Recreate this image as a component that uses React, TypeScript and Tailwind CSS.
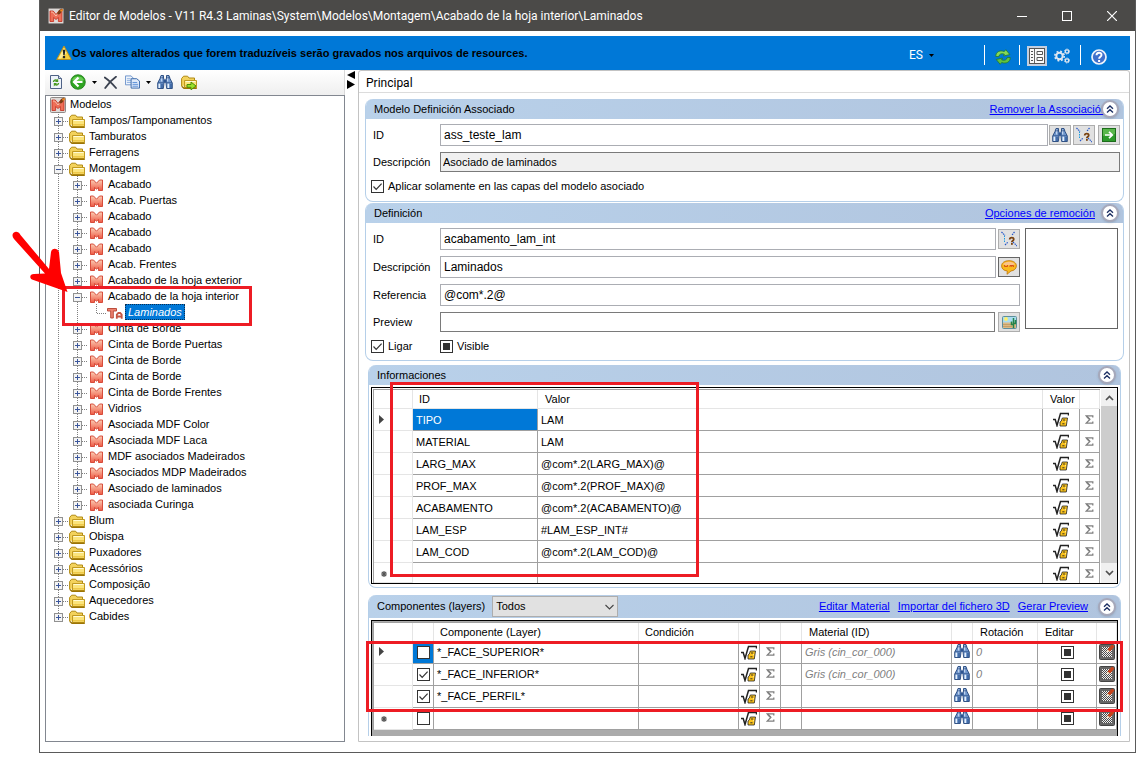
import React from "react";

const inputBase =
  "min-w-0 flex-1 border bg-white px-[3px] text-[12px] leading-4 text-black outline-none";

/* ---------- icons ---------- */

function AppIcon({ className = "size-4" }: { className?: string }) {
  return (
    <svg viewBox="0 0 16 16" className={className} aria-hidden="true">
      <rect x="0.5" y="0.5" width="15" height="15" rx="1" fill="#dedad8" stroke="#8f8a88" />
      <path d="M2 3h3.200l2.800 3.500L10.800 3H14v10.500h-3.600V9.500L8 11.500l-2.400-2v4H2z" fill="#ee6f58" stroke="#c22c1c" strokeWidth=".8" />
      <path d="M3 4h1.700l3.300 4 3-4" fill="none" stroke="#fbc9b4" strokeWidth=".9" />
      <path d="M9 6l2-4 3-1.500 1 1.500-3 4-2 .5z" fill="#7a3d16" />
      <path d="M12 2l2.500-1 .8 1.200L13 4z" fill="#f08a24" />
    </svg>
  );
}

function WarningIcon() {
  return (
    <svg viewBox="0 0 16 16" className="size-4" aria-hidden="true">
      <path d="M8 1L15.300 14.500H.7z" fill="#f5cf3e" stroke="#b99020" strokeLinejoin="round" />
      <path d="M8 3l2.500 5L5 13.500H2.300z" fill="#fff3b0" opacity=".8" />
      <path d="M6.700 4.800h2.600l-.6 5.400H7.300z" fill="#222" />
      <rect x="6.900" y="11" width="2.200" height="2.200" fill="#222" />
    </svg>
  );
}

function Caret({ className = "text-black" }: { className?: string }) {
  return (
    <svg viewBox="0 0 5 3" className={`h-[3px] w-[5px] ${className}`} aria-hidden="true">
      <path d="M0 0h5L2.500 3z" fill="currentColor" />
    </svg>
  );
}

function PageRefreshIcon() {
  return (
    <svg viewBox="0 0 12 14" className="h-[14px] w-3" aria-hidden="true">
      <path d="M.5.5h8l3 3v10H.5z" fill="#eef3fa" stroke="#4f6286" />
      <path d="M8.500.5v3h3" fill="#cfd8e6" stroke="#4f6286" />
      <path d="M2.800 7c.4-2.400 2.600-3.300 4.200-2.300L8.200 3.500v3.600H4.800l1.100-1.200c-.8-.4-1.500 0-1.700 1.100z" fill="#4b9a22" />
      <path d="M9.200 8c-.4 2.400-2.600 3.300-4.200 2.300l-1.200 1.200V7.900h3.400L6.100 9.100c.8.400 1.500 0 1.700-1.100z" fill="#4b9a22" />
    </svg>
  );
}

function BackIcon() {
  return (
    <svg viewBox="0 0 16 16" className="size-4" aria-hidden="true">
      <circle cx="8" cy="8" r="7.300" fill="#2fa522" stroke="#1b7a14" strokeWidth=".8" />
      <path d="M2 6a6.500 5.500 0 0112 0c-3 2-8 2-12 0z" fill="#8fe676" opacity=".6" />
      <path d="M8.500 3.500L4 8l4.500 4.500M4.500 8h8" fill="none" stroke="#fff" strokeWidth="2.200" />
    </svg>
  );
}

function DeleteIcon() {
  return (
    <svg viewBox="0 0 13 13" className="size-[13px]" aria-hidden="true">
      <path d="M.8 1.500Q6 5 12 12M12 .8Q6 5 1.200 12" fill="none" stroke="#3b4250" strokeWidth="1.800" strokeLinecap="round" />
    </svg>
  );
}

function CopyIcon() {
  return (
    <svg viewBox="0 0 16 14" className="h-[14px] w-[15px]" aria-hidden="true">
      <path d="M.5.500h6l2.500 2.500v7H.5z" fill="#eef4fc" stroke="#6d93cb" />
      <path d="M2 3.500h4M2 5.500h5M2 7.500h5" stroke="#8fb0de" />
      <path d="M6.500 3.500h6L15.500 6v7.500h-9z" fill="#dfeafa" stroke="#3565a8" />
      <path d="M8 7.500h5M8 9.500h6M8 11.500h6" stroke="#5b8fd6" />
    </svg>
  );
}

function BinocularsIcon() {
  return (
    <svg viewBox="0 0 16 14" className="h-[14px] w-4 shrink-0" aria-hidden="true">
      <path d="M4 .5h2.500v2.500L7 4.500V8l-.7 5.500H.7V8L3 3.500zM9.500.5H12l1 3L15.300 8v5.500H9.700L9 8V4.500l.5-1.500z" fill="#6f96cc" stroke="#24467c" strokeWidth=".9" />
      <path d="M6.800 4.500h2.400v3.300H6.800z" fill="#2f5590" />
      <path d="M2.300 8.500v4.500M11.300 8.500v4.500" stroke="#e6f0fb" strokeWidth="1.500" />
      <path d="M4.700 1.500v5M10.700 1.500v5" stroke="#d3e2f5" />
      <path d="M1 7.800h5.300M9.700 7.800H15M3.500 2.800h3M9.500 2.800h3" stroke="#24467c" strokeWidth=".7" />
      <path d="M5 9v4M14 9v4" stroke="#2d5796" strokeWidth="1.300" />
    </svg>
  );
}

function FolderShape() {
  return (
    <>
      <path d="M.6 11.500V3.500l2-2.300h4l1.400 1.800h5.500v3" fill="#f3d25c" stroke="#b18a13" />
      <path d="M3.500 5.500H15.500V12.500H3.500z" fill="#fbe47c" stroke="#c19a22" />
      <path d="M4.500 6.500h10" stroke="#fffbd6" />
      <path d="M4 10.800h11" stroke="#efc94a" strokeWidth="1.600" />
      <path d="M1 11.500l2 1.700h12.800" fill="none" stroke="#9b7405" strokeWidth="1.500" />
    </>
  );
}

function FolderIcon() {
  return (
    <svg viewBox="0 0 16 14" className="mt-[2px] h-[14px] w-4 shrink-0" aria-hidden="true">
      <FolderShape />
    </svg>
  );
}

function FolderArrowIcon() {
  return (
    <svg viewBox="0 0 16 15" className="h-[15px] w-4" aria-hidden="true">
      <FolderShape />
      <path d="M6 9.500h4V7l5 4-5 3.800v-2.500H6z" fill="#9be02a" stroke="#4a8f0a" />
    </svg>
  );
}

function ModelIcon() {
  return (
    <svg viewBox="0 0 18 14" className="mt-[2px] h-[14px] w-[18px] shrink-0" aria-hidden="true">
      <defs>
        <linearGradient id="model-fill" x1="0" y1="0" x2="0" y2="1">
          <stop offset="0" stopColor="#fbcdb4" />
          <stop offset="1" stopColor="#ee5a45" />
        </linearGradient>
      </defs>
      <path
        d="M2.500 2h3l3 3.200 3-3.200h3v10.500h-4V9.500l-2 1.700-2-1.700v3h-4z"
        fill="url(#model-fill)"
        stroke="#d2402e"
        strokeWidth=".9"
      />
    </svg>
  );
}

function DefinitionIcon() {
  return (
    <svg viewBox="0 0 16 13" className="mt-[3px] h-[13px] w-4 shrink-0" aria-hidden="true">
      <path d="M.5 1.500h9v2.500H6.300V11H3.700V4H.5z" fill="#ec8270" stroke="#b5412f" strokeWidth=".9" />
      <path d="M9.800 11.800V7.500l1.500-1.500h1.900l1.500 1.500v4.300M9.800 9.500h5" fill="none" stroke="#c65542" strokeWidth="1.800" />
    </svg>
  );
}

function SyncIcon() {
  return (
    <svg viewBox="0 0 16 16" className="size-4" aria-hidden="true">
      <path d="M.8 7.500C.5 3 5 .8 9.300 2.500L10.800.7 14.800 5.500 8.500 7l.9-1.800C6.500 4 4.300 5 3.800 7.500z" fill="#86d957" stroke="#1f7a2e" strokeWidth=".8" />
      <path d="M15.200 8.500c.3 4.500-4.200 6.700-8.500 5L5.200 15.300 1.200 10.500 7.500 9l-.9 1.800c2.900 1.200 5.100.2 5.600-2.300z" fill="#62c240" stroke="#1f7a2e" strokeWidth=".8" />
    </svg>
  );
}

function FormIcon() {
  return (
    <svg viewBox="0 0 16 16" className="size-4" aria-hidden="true">
      <rect x=".5" y=".5" width="15" height="15" fill="#fafafa" stroke="#555" />
      <path d="M5.500 1v14" stroke="#666" />
      <path d="M2 3.500h2M2 6.500h2M2 9.500h2M2 12.500h2" stroke="#555" />
      <path d="M8 3.500h5.500v3H8zM8 9.500h5.500v3H8z" fill="#fff" stroke="#555" />
    </svg>
  );
}

function GearsIcon() {
  return (
    <svg viewBox="0 0 16 16" className="size-4" aria-hidden="true">
      <circle cx="5.500" cy="8" r="3.200" fill="none" stroke="#dfe7f1" strokeWidth="2" />
      <circle cx="5.500" cy="8" r="4.700" fill="none" stroke="#dfe7f1" strokeWidth="1.600" strokeDasharray="1.900 1.800" />
      <circle cx="13" cy="3.500" r="1.700" fill="none" stroke="#dfe7f1" strokeWidth="1.300" />
      <circle cx="13" cy="3.500" r="2.500" fill="none" stroke="#dfe7f1" strokeWidth="1" strokeDasharray="1 1" />
      <circle cx="13" cy="12.500" r="1.700" fill="none" stroke="#dfe7f1" strokeWidth="1.300" />
      <circle cx="13" cy="12.500" r="2.500" fill="none" stroke="#dfe7f1" strokeWidth="1" strokeDasharray="1 1" />
    </svg>
  );
}

function HelpIcon() {
  return (
    <svg viewBox="0 0 16 16" className="size-4" aria-hidden="true">
      <circle cx="8" cy="8" r="7" fill="#3f70cc" stroke="#eef3fb" strokeWidth="1.700" />
      <path d="M5.500 6.200C5.500 3 10.700 3 10.500 6c0 1.700-2.400 1.700-2.400 3.800" fill="none" stroke="#fff" strokeWidth="1.900" />
      <rect x="7.100" y="11" width="2" height="2" fill="#fff" />
    </svg>
  );
}

function PathIcon() {
  return (
    <svg viewBox="0 0 16 16" className="size-4" aria-hidden="true">
      <path d="M3.500 4.500v7.500" fill="none" stroke="#1c9be0" strokeDasharray="1.500 1" />
      <path d="M.5 1L4 4.500M13.500 1L11 4M4 14l3-3M12 11l4 4" fill="none" stroke="#2455c8" strokeWidth="1.200" strokeDasharray="1.500 .8" />
      <path d="M8.700 8.500C8.700 5.800 13 6 12.700 8.400c0 1.300-1.900 1.400-1.900 2.800" fill="none" stroke="#7a4312" strokeWidth="1.800" />
      <rect x="10" y="12" width="1.800" height="1.800" fill="#7a4312" />
    </svg>
  );
}

function GoIcon() {
  return (
    <svg viewBox="0 0 14 14" className="size-[14px]" aria-hidden="true">
      <rect x=".5" y=".5" width="13" height="13" fill="#2d9a2b" stroke="#1d6d1c" />
      <path d="M1 1h12v5L1 8z" fill="#6cc35a" opacity=".7" />
      <path d="M3 7h7M7 3.800L10.300 7 7 10.200" fill="none" stroke="#fff" strokeWidth="1.700" />
    </svg>
  );
}

function SpeechIcon() {
  return (
    <svg viewBox="0 0 16 15" className="h-[15px] w-4" aria-hidden="true">
      <path d="M8 .7c4.300 0 7.400 2 7.400 5.200 0 3-2.600 4.800-5.400 5.100L6 14.300 6.300 11C3 10.700.6 8.900.6 5.900.6 2.700 3.700.7 8 .7z" fill="#f9b91e" stroke="#c07408" strokeWidth=".8" />
      <path d="M2 4.500c2-3.800 10-3.800 12 0-3 1-9 1-12 0z" fill="#fbc48c" />
      <path d="M3.500 5v1.500h3V5M9 7V5.500h3.500V7M10.800 5.500V7" fill="none" stroke="#d8501c" />
    </svg>
  );
}

function PictureIcon() {
  return (
    <svg viewBox="0 0 15 13" className="h-[13px] w-[15px]" aria-hidden="true">
      <rect x=".5" y=".5" width="14" height="12" rx="1" fill="#a9dcf0" stroke="#5d8f9c" />
      <path d="M1 6.500h13V12H1z" fill="#dcb984" />
      <path d="M1 8.500h9M1 10.500h9" stroke="#b9935a" strokeWidth=".7" />
      <circle cx="4" cy="3" r="1.900" fill="#fff06a" />
      <path d="M11.500 2v10M9.500 5.500v3h2M13.500 4v3.500h-2" fill="none" stroke="#23844a" strokeWidth="1.500" />
    </svg>
  );
}

function FormulaIcon() {
  return (
    <svg viewBox="0 0 16 15" className="h-[15px] w-4 shrink-0" aria-hidden="true">
      <path d="M0 7.500h2.200l1.800 6L7.500 1.500H15.500v2" fill="none" stroke="#222" strokeWidth="1.500" />
      <path d="M9.300 6h5.200l-1.200 8H7V10l1.300-1z" fill="#fbc31c" stroke="#222" strokeWidth=".8" />
      <path d="M10 8h2.200M9.300 11.800h2.200" stroke="#222" strokeWidth=".9" />
      <path d="M13 9.500l-1 .5" stroke="#fff2b0" />
    </svg>
  );
}

function SigmaIcon() {
  return (
    <svg viewBox="0 0 9 9" className="size-[9px] shrink-0" aria-hidden="true">
      <path d="M7.800 2.600V.9H1.200L4.800 4.500 1.200 8.100h6.600V6.400" fill="none" stroke="#808080" strokeWidth="1.300" />
      <path d="M1.500 1l3.300 3.500" stroke="#808080" strokeWidth="1.800" />
    </svg>
  );
}

function TextureIcon() {
  return (
    <svg viewBox="0 0 16 16" className="size-4 shrink-0" aria-hidden="true">
      <defs>
        <pattern id="weave" width="2" height="2" patternUnits="userSpaceOnUse">
          <rect width="2" height="2" fill="#4a4a4a" />
          <rect width="1" height="1" fill="#f0f0f0" />
          <rect x="1" y="1" width="1" height="1" fill="#f0f0f0" />
        </pattern>
      </defs>
      <rect x=".5" y=".5" width="15" height="15" rx="1" fill="#666" stroke="#444" />
      <rect x="3" y="3" width="10" height="10" fill="url(#weave)" />
      <path d="M8.500 5.500L13 .5l2.500 2L11 7.500z" fill="#c8431a" />
      <path d="M7.500 8.200l1-2.700 2.500 2z" fill="#f8e3c4" />
    </svg>
  );
}

function RowArrow() {
  return (
    <svg viewBox="0 0 5 9" className="ml-[5px] h-[9px] w-[5px]" aria-hidden="true">
      <path d="M0 0l5 4.500L0 9z" fill="#444" />
    </svg>
  );
}

function NewRowMark() {
  return (
    <svg viewBox="0 0 6 6" className="mt-[3px] ml-[7px] size-[6px]" aria-hidden="true">
      <path d="M3 0v6M0 3h6M.8.8l4.400 4.400M5.200.8L.8 5.200" stroke="#555" strokeWidth="1.200" />
    </svg>
  );
}

/* ---------- shared controls ---------- */

type CheckState = "on" | "off" | "mixed";

function Check({ id, label, state }: { id?: string; label?: string; state: CheckState }) {
  return (
    <span className="inline-grid size-[13px] shrink-0">
      <input
        type="checkbox"
        id={id}
        aria-label={label}
        defaultChecked={state === "on"}
        ref={(el) => {
          if (el) el.indeterminate = state === "mixed";
        }}
        className="peer size-[13px] appearance-none border border-[#333] bg-white [grid-area:1/1]"
      />
      <svg
        viewBox="0 0 13 13"
        className="pointer-events-none invisible size-[13px] [grid-area:1/1] peer-checked:visible"
        aria-hidden="true"
      >
        <path d="M2.500 6.500l2.700 2.800L10.600 3.700" fill="none" stroke="#333" strokeWidth="1.200" />
      </svg>
      <span className="pointer-events-none invisible m-[3px] bg-[#333] [grid-area:1/1] peer-indeterminate:visible" />
    </span>
  );
}

function CollapseButton() {
  return (
    <button
      type="button"
      aria-label="Recolher"
      className="flex size-[18px] shrink-0 items-center justify-center rounded-full border-2 border-[#a6a8ba] bg-white shadow"
    >
      <svg viewBox="0 0 8 8" className="size-2" aria-hidden="true">
        <path d="M1 3.800L4 1l3 2.800M1 7.500l3-2.800 3 2.800" fill="none" stroke="#1c2f63" strokeWidth="1.300" />
      </svg>
    </button>
  );
}

function TextLink({ children }: { children: React.ReactNode }) {
  return (
    <a href="#" className="text-[11px] whitespace-nowrap text-[#0000ff] underline">
      {children}
    </a>
  );
}

function IconButton({
  label,
  active = false,
  children,
}: {
  label: string;
  active?: boolean;
  children: React.ReactNode;
}) {
  return (
    <button
      type="button"
      aria-label={label}
      className={`flex h-5 w-[22px] shrink-0 items-center justify-center border bg-[#e1e1e1] ${
        active ? "border-[#666]" : "border-[#adadad]"
      }`}
    >
      {children}
    </button>
  );
}

function ToolButton({ label, children }: { label: string; children: React.ReactNode }) {
  return (
    <button type="button" aria-label={label} className="flex items-center gap-[6px]">
      {children}
    </button>
  );
}

/* ---------- tree ---------- */

type TreeItem = {
  label: string;
  level: 1 | 2 | 3;
  open?: boolean;
  last?: boolean;
};

const models = (labels: string[]): TreeItem[] =>
  labels.map((label) => ({ label, level: 2 as const }));

const tree: TreeItem[] = [
  { label: "Tampos/Tamponamentos", level: 1 },
  { label: "Tamburatos", level: 1 },
  { label: "Ferragens", level: 1 },
  { label: "Montagem", level: 1, open: true },
  ...models([
    "Acabado",
    "Acab. Puertas",
    "Acabado",
    "Acabado",
    "Acabado",
    "Acab. Frentes",
    "Acabado de la hoja exterior",
  ]),
  { label: "Acabado de la hoja interior", level: 2, open: true },
  { label: "Laminados", level: 3, last: true },
  ...models([
    "Cinta de Borde",
    "Cinta de Borde Puertas",
    "Cinta de Borde",
    "Cinta de Borde",
    "Cinta de Borde Frentes",
    "Vidrios",
    "Asociada MDF Color",
    "Asociada MDF Laca",
    "MDF asociados Madeirados",
    "Asociados MDP Madeirados",
    "Asociado de laminados",
  ]),
  { label: "asociada Curinga", level: 2, last: true },
  { label: "Blum", level: 1 },
  { label: "Obispa", level: 1 },
  { label: "Puxadores", level: 1 },
  { label: "Acessórios", level: 1 },
  { label: "Composição", level: 1 },
  { label: "Aquecedores", level: 1 },
  { label: "Cabides", level: 1, last: true },
];

function Guide() {
  return (
    <svg viewBox="0 0 19 16" className="h-4 w-[19px] shrink-0" aria-hidden="true">
      <path d="M12.500 0v16" stroke="#808080" strokeDasharray="1 1" />
    </svg>
  );
}

function Branch({ item }: { item: TreeItem }) {
  return (
    <svg viewBox="0 0 23 16" className="h-4 w-[23px] shrink-0" aria-hidden="true">
      <path d={item.last ? "M12.500 0v10" : "M12.500 0v16"} stroke="#808080" strokeDasharray="1 1" />
      <path d="M13 9.500h10" stroke="#808080" strokeDasharray="1 1" />
      {item.level < 3 && (
        <>
          <rect x="8.500" y="5.500" width="8" height="8" fill="#f4f4f4" stroke="#919191" />
          <path d={item.open ? "M10 9.500h5" : "M10 9.500h5M12.500 7v5"} stroke="#3b569c" />
        </>
      )}
    </svg>
  );
}

function TreeRow({ item }: { item: TreeItem }) {
  return (
    <li className="flex h-4">
      {item.level > 1 && <Guide />}
      {item.level > 2 && <Guide />}
      <Branch item={item} />
      {item.level === 1 && <FolderIcon />}
      {item.level === 2 && <ModelIcon />}
      {item.level === 3 && <DefinitionIcon />}
      {item.level === 3 ? (
        <button
          type="button"
          className="ml-[2px] h-4 border border-dotted border-[#0b2f52] bg-[#0078d7] px-[2px] text-[11px] leading-[13px] whitespace-nowrap text-white italic"
        >
          {item.label}
        </button>
      ) : (
        <button
          type="button"
          className={`text-[11px] leading-4 whitespace-nowrap ${item.level === 1 ? "ml-1" : "ml-[2px]"}`}
        >
          {item.label}
        </button>
      )}
    </li>
  );
}

function Sidebar() {
  return (
    <aside className="flex w-[300px] shrink-0 flex-col">
      <div className="flex h-[25px] items-center border-r border-[#d8d8d8] bg-linear-to-b from-white to-[#efefef] pb-px pl-[5px]">
        <ToolButton label="Atualizar">
          <PageRefreshIcon />
        </ToolButton>
        <div className="ml-2">
          <ToolButton label="Voltar">
            <BackIcon />
            <Caret />
          </ToolButton>
        </div>
        <div className="ml-[7px]">
          <ToolButton label="Excluir">
            <DeleteIcon />
          </ToolButton>
        </div>
        <div className="ml-2">
          <ToolButton label="Copiar">
            <CopyIcon />
            <Caret />
          </ToolButton>
        </div>
        <div className="ml-[6px]">
          <ToolButton label="Localizar">
            <BinocularsIcon />
          </ToolButton>
        </div>
        <div className="ml-2">
          <ToolButton label="Exportar">
            <FolderArrowIcon />
          </ToolButton>
        </div>
      </div>
      <div className="relative flex-1 border border-[#828790] bg-white">
        <div className="flex h-4 items-center gap-[4px] pl-1">
          <AppIcon className="mt-[2px] size-4 shrink-0" />
          <button type="button" className="text-[11px] leading-4">
            Modelos
          </button>
        </div>
        <ul>
          {tree.map((item, i) => (
            <TreeRow key={i} item={item} />
          ))}
        </ul>
        <div className="pointer-events-none absolute top-[190px] left-[16px] h-10 w-[190px] border-3 border-[#ed1c24]" />
        <svg
          viewBox="0 0 60 66"
          className="pointer-events-none absolute top-[134px] left-[-36px] h-[66px] w-[60px]"
          aria-hidden="true"
        >
          <path
            d="M4 2.500C6 1 9 2 10.500 5L39 39 41 22c1-4 6-4.500 8 0L51 43l6.500 19L22 49.500c-3-2-2-5.500 2-5.500l11-.5L4 9C2 6.500 2 4 4 2.500z"
            fill="#ff0000"
          />
        </svg>
      </div>
    </aside>
  );
}

/* ---------- groups ---------- */

function GroupHeader({
  title,
  actions,
  tall = false,
}: {
  title: React.ReactNode;
  actions?: React.ReactNode;
  tall?: boolean;
}) {
  return (
    <header
      className={`flex items-center justify-between rounded-t-[7px] bg-linear-to-r from-[#b9d1ea] to-[#b0c4de] pr-1 pl-2 text-[11px] ${
        tall ? "h-[23px]" : "h-5"
      }`}
    >
      {title}
      <div className="flex items-center">
        {actions}
        <CollapseButton />
      </div>
    </header>
  );
}

function FieldRow({
  id,
  label,
  children,
}: {
  id: string;
  label: string;
  children: React.ReactNode;
}) {
  return (
    <div className="flex items-center">
      <label htmlFor={id} className="w-[67px] shrink-0 text-[11px] leading-4">
        {label}
      </label>
      {children}
    </div>
  );
}

function AssociatedGroup() {
  return (
    <section className="rounded-[8px] border border-t-0 border-[#b5cfe9] pb-2">
      <GroupHeader
        title={<h2>Modelo Definición Associado</h2>}
        actions={
          <span className="-mr-[6px]">
            <TextLink>Remover la Associación</TextLink>
          </span>
        }
      />
      <div className="mt-[5px] flex flex-col gap-[6px] pr-[3px] pl-[7px]">
        <FieldRow id="assoc-id" label="ID">
          <input id="assoc-id" defaultValue="ass_teste_lam" className={`${inputBase} h-[22px] border-[#abadb3]`} />
          <div className="ml-[1px] flex gap-[2px]">
            <IconButton label="Localizar modelo">
              <BinocularsIcon />
            </IconButton>
            <IconButton label="Origem">
              <PathIcon />
            </IconButton>
            <div className="ml-px flex">
              <IconButton label="Ir para">
                <GoIcon />
              </IconButton>
            </div>
          </div>
        </FieldRow>
        <FieldRow id="assoc-desc" label="Descripción">
          <input
            id="assoc-desc"
            readOnly
            defaultValue="Asociado de laminados"
            className="h-5 min-w-0 flex-1 border border-[#7a7a7a] bg-[#f0f0f0] px-[2px] text-[11px] outline-none"
          />
        </FieldRow>
      </div>
      <div className="mt-[7px] flex items-center gap-1 pl-[5px]">
        <Check id="apply-layers" state="on" />
        <label htmlFor="apply-layers" className="text-[11px] leading-[14px]">
          Aplicar solamente en las capas del modelo asociado
        </label>
      </div>
    </section>
  );
}

function DefinitionGroup() {
  return (
    <section className="rounded-[8px] border border-t-0 border-[#b5cfe9] pb-[7px]">
      <GroupHeader
        title={<h2>Definición</h2>}
        actions={
          <span className="mr-[6px]">
            <TextLink>Opciones de remoción</TextLink>
          </span>
        }
      />
      <div className="mt-[5px] flex gap-[5px] pr-[5px] pl-[7px]">
        <div className="flex min-w-0 flex-1 flex-col gap-[6px]">
          <FieldRow id="def-id" label="ID">
            <input id="def-id" defaultValue="acabamento_lam_int" className={`${inputBase} mr-[2px] h-[22px] border-[#abadb3]`} />
            <IconButton label="Origem da definição">
              <PathIcon />
            </IconButton>
          </FieldRow>
          <FieldRow id="def-desc" label="Descripción">
            <input id="def-desc" defaultValue="Laminados" className={`${inputBase} mr-[2px] h-[22px] border-[#abadb3]`} />
            <IconButton label="Traduções" active>
              <SpeechIcon />
            </IconButton>
          </FieldRow>
          <FieldRow id="def-ref" label="Referencia">
            <input id="def-ref" defaultValue="@com*.2@" className={`${inputBase} h-[22px] border-[#abadb3]`} />
          </FieldRow>
          <FieldRow id="def-preview" label="Preview">
            <input id="def-preview" className={`${inputBase} mr-[3px] h-5 border-[#7a7a7a]`} />
            <IconButton label="Escolher imagem">
              <PictureIcon />
            </IconButton>
          </FieldRow>
        </div>
        <div className="h-[101px] w-[93px] shrink-0 border border-[#646464] bg-white" />
      </div>
      <div className="mt-[7px] flex items-center pl-[5px] text-[11px] leading-[14px]">
        <div className="flex w-[69px] items-center gap-1">
          <Check id="ligar" state="on" />
          <label htmlFor="ligar">Ligar</label>
        </div>
        <div className="flex items-center gap-1">
          <Check id="visible" state="mixed" />
          <label htmlFor="visible">Visible</label>
        </div>
      </div>
    </section>
  );
}

/* ---------- tables ---------- */

const headCell = "h-[19px] border-r border-b border-[#e5e5e5] p-0 text-left font-normal";
const bodyCell = "h-[22px] border-r border-b border-[#a0a0a0] p-0";
const lastCell = "h-5 border-r border-[#a0a0a0] p-0";
const rowHead = "border-r border-b border-[#e5e5e5] p-0 font-normal";

const infoRows = [
  ["TIPO", "LAM"],
  ["MATERIAL", "LAM"],
  ["LARG_MAX", "@com*.2(LARG_MAX)@"],
  ["PROF_MAX", "@com*.2(PROF_MAX)@"],
  ["ACABAMENTO", "@com*.2(ACABAMENTO)@"],
  ["LAM_ESP", "#LAM_ESP_INT#"],
  ["LAM_COD", "@com*.2(LAM_COD)@"],
  ["", ""],
];

function FormulaButton() {
  return (
    <button type="button" aria-label="Fórmula" className="flex w-full justify-center">
      <FormulaIcon />
    </button>
  );
}

function SigmaButton() {
  return (
    <button type="button" aria-label="Somatório" className="flex w-full justify-center">
      <SigmaIcon />
    </button>
  );
}

function InfoGroup() {
  return (
    <section className="relative mx-[3px] mt-1 rounded-[8px] border border-t-0 border-[#b5cfe9] pb-[3px]">
      <GroupHeader title={<h2>Informaciones</h2>} />
      <div className="mt-[2px] mr-[2px] ml-[2px] flex border border-black pt-[1px] pl-[1px]">
        <div className="min-w-0 flex-1 border-t border-l border-[#a0a0a0]">
          <table className="w-full table-fixed border-separate border-spacing-0 text-[11px] leading-4">
            <colgroup>
              <col className="w-[39px]" />
              <col className="w-[125px]" />
              <col />
              <col className="w-[37px]" />
              <col className="w-5" />
            </colgroup>
            <thead>
              <tr>
                <th className={headCell} />
                <th className={`${headCell} pl-[6px]`}>ID</th>
                <th className={`${headCell} pl-[7px]`}>Valor</th>
                <th className={`${headCell} pl-[7px]`}>Valor</th>
                <th className={headCell} />
              </tr>
            </thead>
            <tbody>
              {infoRows.map(([id, value], i) => {
                const isLast = i === infoRows.length - 1;
                const cell = isLast ? lastCell : bodyCell;
                return (
                  <tr key={i}>
                    <th className={rowHead} scope="row">
                      {i === 0 && <RowArrow />}
                      {isLast && <NewRowMark />}
                    </th>
                    <td className={`${cell} pl-[3px] ${i === 0 ? "bg-[#0078d7] text-white" : ""}`}>{id}</td>
                    <td className={`${cell} pl-[3px]`}>{value}</td>
                    <td className={cell}>
                      <FormulaButton />
                    </td>
                    <td className={cell}>
                      <SigmaButton />
                    </td>
                  </tr>
                );
              })}
            </tbody>
          </table>
        </div>
        <div className="ml-[1px] flex w-[16px] flex-col bg-[#f0f0f0]">
          <button type="button" aria-label="Rolar para cima" className="flex h-[17px] items-center justify-center">
            <svg viewBox="0 0 9 6" className="h-[6px] w-[9px]" aria-hidden="true">
              <path d="M1 5l3.500-3.500L8 5" fill="none" stroke="#505050" strokeWidth="1.700" />
            </svg>
          </button>
          <div className="flex-1 bg-[#cdcdcd]" />
          <button type="button" aria-label="Rolar para baixo" className="flex h-5 items-center justify-center">
            <svg viewBox="0 0 9 6" className="h-[6px] w-[9px]" aria-hidden="true">
              <path d="M1 1l3.500 3.500L8 1" fill="none" stroke="#505050" strokeWidth="1.700" />
            </svg>
          </button>
        </div>
      </div>
      <div className="pointer-events-none absolute top-[17px] left-[21px] h-[195px] w-[309px] border-3 border-[#ed1c24]" />
    </section>
  );
}

type Layer = { name: string; state: CheckState; material: string; rotation: string };

const layers: Layer[] = [
  { name: "*_FACE_SUPERIOR*", state: "off", material: "Gris (cin_cor_000)", rotation: "0" },
  { name: "*_FACE_INFERIOR*", state: "on", material: "Gris (cin_cor_000)", rotation: "0" },
  { name: "*_FACE_PERFIL*", state: "on", material: "", rotation: "" },
  { name: "", state: "off", material: "", rotation: "" },
];

function ComponentsGroup() {
  return (
    <section className="relative mx-[3px] mt-[7px] rounded-t-[8px] border-x border-[#b5cfe9]">
      <GroupHeader
        tall
        title={
          <div className="flex items-center gap-[7px]">
            <label htmlFor="layer-filter">Componentes (layers)</label>
            <span className="inline-grid items-center">
              <select
                id="layer-filter"
                className="h-[21px] w-[126px] appearance-none border border-[#adadad] bg-[#e1e1e1] px-[3px] text-[11px] [grid-area:1/1]"
              >
                <option>Todos</option>
              </select>
              <svg
                viewBox="0 0 9 6"
                className="pointer-events-none mr-1 h-[6px] w-[9px] justify-self-end [grid-area:1/1]"
                aria-hidden="true"
              >
                <path d="M.5 1l4 4 4-4" fill="none" stroke="#444" strokeWidth="1.100" />
              </svg>
            </span>
          </div>
        }
        actions={
          <div className="mr-[10px] flex gap-2">
            <TextLink>Editar Material</TextLink>
            <TextLink>Importar del fichero 3D</TextLink>
            <TextLink>Gerar Preview</TextLink>
          </div>
        }
      />
      <div className="mx-[2px] mt-[2px] border border-b-0 border-black bg-[#ababab] pt-[1px] pl-[1px]">
        <div className="border-t border-l border-[#a0a0a0] bg-white">
          <table className="w-full table-fixed border-separate border-spacing-0 text-[11px] leading-4">
            <colgroup>
              <col className="w-[39px]" />
              <col className="w-[21px]" />
              <col />
              <col className="w-[100px]" />
              <col className="w-[21px]" />
              <col className="w-[21px]" />
              <col className="w-[21px]" />
              <col className="w-[150px]" />
              <col className="w-[21px]" />
              <col className="w-[65px]" />
              <col className="w-[59px]" />
              <col className="w-5" />
            </colgroup>
            <thead>
              <tr>
                <th className={headCell} />
                <th className={headCell} />
                <th className={`${headCell} pl-[6px]`}>Componente (Layer)</th>
                <th className={`${headCell} pl-[6px]`}>Condición</th>
                <th className={headCell} />
                <th className={headCell} />
                <th className={headCell} />
                <th className={`${headCell} pl-[7px]`}>Material (ID)</th>
                <th className={headCell} />
                <th className={`${headCell} pl-[7px]`}>Rotación</th>
                <th className={`${headCell} pl-[7px]`}>Editar</th>
                <th className={headCell} />
              </tr>
            </thead>
            <tbody>
              {layers.map((layer, i) => (
                <tr key={i} className="*:align-top">
                  <th className={`${rowHead} pt-[5px]`} scope="row">
                    {i === 0 && <RowArrow />}
                    {i === layers.length - 1 && <NewRowMark />}
                  </th>
                  <td className={`${bodyCell} ${i === 0 ? "bg-[#0078d7]" : ""}`}>
                    <div className="flex justify-center pt-1">
                      <Check label="Usar layer" state={layer.state} />
                    </div>
                  </td>
                  <td className={`${bodyCell} pt-[2px] pl-[3px]`}>{layer.name}</td>
                  <td className={bodyCell} />
                  <td className={`${bodyCell} pt-[3px]`}>
                    <FormulaButton />
                  </td>
                  <td className={`${bodyCell} pt-[5px]`}>
                    <SigmaButton />
                  </td>
                  <td className={bodyCell} />
                  <td className={`${bodyCell} pt-[2px] pl-[3px] text-[#808080] italic`}>{layer.material}</td>
                  <td className={`${bodyCell} pt-[2px]`}>
                    <button type="button" aria-label="Localizar material" className="flex w-full justify-center">
                      <BinocularsIcon />
                    </button>
                  </td>
                  <td className={`${bodyCell} pt-[2px] pl-[3px] text-[#808080] italic`}>{layer.rotation}</td>
                  <td className={bodyCell}>
                    <div className="flex justify-center pt-1">
                      <Check label="Editar" state="mixed" />
                    </div>
                  </td>
                  <td className={`${bodyCell} pt-[2px]`}>
                    <button type="button" aria-label="Editar textura" className="flex w-full justify-center">
                      <TextureIcon />
                    </button>
                  </td>
                </tr>
              ))}
            </tbody>
          </table>
        </div>
        <div className="h-[6px]" />
      </div>
      <div className="pointer-events-none absolute top-[46px] -right-[3px] -left-[3px] h-[71px] border-3 border-[#ed1c24]" />
    </section>
  );
}

/* ---------- window ---------- */

function TitleBar() {
  return (
    <header className="flex h-[31px] items-center bg-[#4b4a48] pr-[18px] pl-2 text-white">
      <AppIcon />
      <h1 className="ml-[5px] flex-1 truncate font-['Roboto','Open_Sans',sans-serif] text-[12px]">
        Editor de Modelos - V11 R4.3 Laminas\System\Modelos\Montagem\Acabado de la hoja interior\Laminados
      </h1>
      <div className="flex gap-[35px]">
        <button type="button" aria-label="Minimizar">
          <svg viewBox="0 0 10 10" className="size-[10px]" aria-hidden="true">
            <path d="M0 5.500h10" stroke="#fff" />
          </svg>
        </button>
        <button type="button" aria-label="Maximizar">
          <svg viewBox="0 0 10 10" className="size-[10px]" aria-hidden="true">
            <rect x=".5" y=".5" width="9" height="9" fill="none" stroke="#fff" />
          </svg>
        </button>
        <button type="button" aria-label="Fechar">
          <svg viewBox="0 0 10 10" className="size-[10px]" aria-hidden="true">
            <path d="M0 0l10 10M10 0L0 10" stroke="#fff" strokeWidth="1.200" />
          </svg>
        </button>
      </div>
    </header>
  );
}

function NoticeBar() {
  return (
    <div className="flex h-[34px] items-center bg-[#0078d7] pr-[23px] pl-[11px]">
      <WarningIcon />
      <p className="flex-1 truncate pt-px text-[11px] font-bold text-black">
        Os valores alterados que forem traduzíveis serão gravados nos arquivos de resources.
      </p>
      <div className="flex items-center pt-1">
        <button
          type="button"
          className="mr-[50px] flex items-center gap-[6px] font-['Roboto','Open_Sans',sans-serif] text-[12px] text-white"
        >
          ES
          <Caret />
        </button>
        <span className="h-5 w-px bg-white" />
        <button type="button" aria-label="Sincronizar" className="mt-1 ml-[10px]">
          <SyncIcon />
        </button>
        <span className="ml-2 h-5 w-px bg-white" />
        <button
          type="button"
          aria-label="Formulário"
          className="mt-[2px] ml-[7px] flex size-5 items-center justify-center bg-[#c4cfdf]"
        >
          <FormIcon />
        </button>
        <button type="button" aria-label="Configurações" className="mt-[2px] ml-[7px]">
          <GearsIcon />
        </button>
        <span className="ml-[10px] h-5 w-px bg-white" />
        <button type="button" aria-label="Ajuda" className="mt-1 ml-[10px]">
          <HelpIcon />
        </button>
      </div>
    </div>
  );
}

export default function App() {
  return (
    <div className="bg-white pr-[11px] pb-2 pl-[39px] font-['Liberation_Sans',Arial,sans-serif] text-black">
      <div className="border-x border-b border-[#5a5a5a] bg-white">
        <TitleBar />
        <div className="px-[5px] pt-[5px] pb-[10px]">
          <NoticeBar />
          <div className="flex">
            <Sidebar />
            <div className="w-[13px] shrink-0 pt-px pl-[2px]">
              <svg viewBox="0 0 8 18" className="h-[18px] w-2" aria-hidden="true">
                <path d="M8 0v8L0 4zM0 9v9l8-4.500z" fill="#000" />
              </svg>
            </div>
            <main className="min-w-0 flex-1 rounded-t-[3px] border border-[#c3c3c3] pb-[5px]">
              <div role="tablist" className="border-b border-[#dcdcdc] pl-[7px]">
                <button
                  type="button"
                  role="tab"
                  aria-selected="true"
                  className="block h-[21px] pt-[2px] font-['Roboto','Open_Sans',sans-serif] text-[12px]"
                >
                  Principal
                </button>
              </div>
              <div className="flex flex-col px-[5px] pt-[6px] pl-[6px]">
                <AssociatedGroup />
                <div className="h-px" />
                <DefinitionGroup />
                <InfoGroup />
                <ComponentsGroup />
              </div>
            </main>
          </div>
        </div>
      </div>
    </div>
  );
}
